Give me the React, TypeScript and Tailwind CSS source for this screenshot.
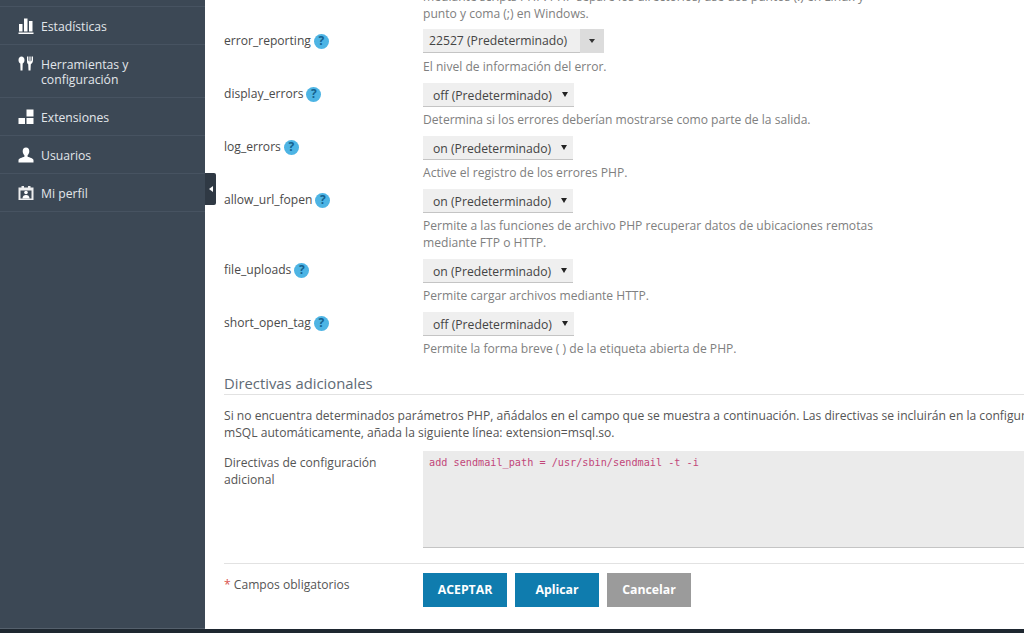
import React from "react";

function Help() {
  return (
    <span className="inline-flex w-[15px] h-[15px] rounded-full bg-[#4db4e4] text-[#15618f] text-[12px] font-bold items-center justify-center leading-none shrink-0">?</span>
  );
}

function Select({ value, w }: { value: string; w: string }) {
  return (
    <div className={`${w} h-[24px] bg-[#efefef] border-b border-[#c4c4c4] flex items-center justify-between pl-[10px] pr-[6px] pt-[3px] text-[12.2px] text-[#444]`}>
      <span>{value}</span>
      <svg width="6" height="5" viewBox="0 0 6 5" className="-mt-[3px]"><path d="M0 0h6L3 5z" fill="#222" /></svg>
    </div>
  );
}

function ComboSelect() {
  return (
    <div className="w-[181px] h-[24px] -mt-[1px] mb-[5px] flex text-[12.2px] text-[#444]">
      <div className="flex-1 bg-[#efefef] border-b border-[#c4c4c4] pl-[6px] pt-[1px] flex items-center">22527 (Predeterminado)</div>
      <div className="w-[24px] bg-[#dcdcdc] flex items-center justify-center">
        <svg width="6" height="4" viewBox="0 0 6 4"><path d="M0 0h6L3 4z" fill="#333" /></svg>
      </div>
    </div>
  );
}

function Row({ label, helpText, control }: { label: string; helpText: React.ReactNode; control: React.ReactNode }) {
  return (
    <div className="flex mb-[8px]">
      <div className="w-[199px] h-[24px] -mt-[1px] flex items-center gap-[3px] text-[12.1px] text-[#4a4a4a] shrink-0">
        <span>{label}</span>
        <Help />
      </div>
      <div>
        {control}
        <div className="mt-[4px] text-[12.1px] leading-[17px] text-[#808080] w-[470px]">{helpText}</div>
      </div>
    </div>
  );
}

const icons: Record<string, React.ReactNode> = {
  stats: (
    <svg width="16" height="16" viewBox="0 0 16 16" fill="#fff">
      <rect x="1" y="6" width="3.5" height="7.500" /><rect x="6" y="0.500" width="3.5" height="13" /><rect x="11" y="3" width="3.5" height="10.500" /><rect x="0.500" y="14.500" width="15" height="1.500" />
    </svg>
  ),
  tools: (
    <svg width="16" height="16" viewBox="0 0 16 16" fill="#fff">
      <path d="M3.500 0.500C5.200 0.500 6.500 2 6.500 4c0 1.800-.8 3-1.800 3.500L4.500 14.500h-2L2.300 7.500C1.300 7 .5 5.800.5 4 .5 2 1.800.5 3.500.500z" />
      <path d="M9 0.500h1.400v3.300c0 1 .5 1.700 1 1.700V.5h1.200v5c.5 0 1-.7 1-1.700V.5H15v3.800c0 2-1 3.300-2.200 3.900l-.3 6.300h-2l-.3-6.300C9 7.600 9 6.300 9 4.300z" />
    </svg>
  ),
  ext: (
    <svg width="16" height="16" viewBox="0 0 16 16" fill="#fff">
      <rect x="0.500" y="9" width="6.500" height="6" /><rect x="8.500" y="9" width="7" height="6" /><rect x="8.500" y="0.500" width="7" height="7" />
    </svg>
  ),
  user: (
    <svg width="16" height="16" viewBox="0 0 16 16" fill="#fff">
      <path d="M8 0.500c2.200 0 3.300 1.700 3.300 3.800 0 1.700-.8 3.200-1.700 4v1.500c2 .8 5.900 1.300 5.900 3.500V15.500H.5v-2.200c0-2.200 3.900-2.700 5.900-3.500V8.300c-.9-.8-1.700-2.300-1.700-4C4.700 2.200 5.800.5 8 .5z" />
    </svg>
  ),
  profile: (
    <svg width="16" height="16" viewBox="0 0 16 16" fill="#fff">
      <path d="M0.500 2.500h3V1h2.500v1.500h4V1h2.500v1.500h3V15H.5z" opacity="0.900" />
      <rect x="2.500" y="5.500" width="11" height="8" fill="#3c4855" />
      <circle cx="8" cy="7.500" r="1.800" />
      <path d="M4.500 13.500c0-2.500 1.500-3.500 3.500-3.500s3.500 1 3.500 3.500z" />
    </svg>
  ),
};

function NavItem({ icon, label }: { icon: string; label: React.ReactNode }) {
  return (
    <div className="flex gap-[6px] pl-[18px] pt-[12px] pb-[10px] border-b border-[#475361] text-[12.2px] leading-[15px] text-[#e2e6ea]">
      <span className="w-[17px] h-[16px] shrink-0 -mt-[1px]">{icons[icon]}</span>
      <span>{label}</span>
    </div>
  );
}

export default function App() {
  return (
    <div className="h-[633px] overflow-hidden flex flex-col bg-white font-['Open_Sans',sans-serif]">
      <div className="flex flex-1 min-h-0">
        <aside className="w-[205px] shrink-0 bg-[#3c4855] relative border-b border-[#55606c]">
          <div className="h-[7px] border-b border-[#475361]" />
          <NavItem icon="stats" label="Estadísticas" />
          <NavItem icon="tools" label={<>Herramientas y<br />configuración</>} />
          <NavItem icon="ext" label="Extensiones" />
          <NavItem icon="user" label="Usuarios" />
          <NavItem icon="profile" label="Mi perfil" />
          <div className="absolute left-[205px] top-[173px] w-[11px] h-[32px] bg-[#2f3944] rounded-r-[2px] flex items-center justify-center">
            <svg width="4" height="6" viewBox="0 0 4 6"><path d="M4 0v6L0 3z" fill="#fff" /></svg>
          </div>
        </aside>
        <main className="flex-1 min-w-0 overflow-hidden pl-[19px]">
          <div className="ml-[199px] mt-[-12px] mb-[8px] text-[12.1px] leading-[17px] text-[#808080] w-[470px]">
            mediante scripts PHP. PHP separe los directorios; use dos puntos (:) en Linux y<br />punto y coma (;) en Windows.
          </div>
          <Row label="error_reporting" control={<ComboSelect />} helpText="El nivel de información del error." />
          <Row label="display_errors" control={<Select value="off (Predeterminado)" w="w-[151px]" />} helpText="Determina si los errores deberían mostrarse como parte de la salida." />
          <Row label="log_errors" control={<Select value="on (Predeterminado)" w="w-[150px]" />} helpText="Active el registro de los errores PHP." />
          <Row label="allow_url_fopen" control={<Select value="on (Predeterminado)" w="w-[150px]" />} helpText="Permite a las funciones de archivo PHP recuperar datos de ubicaciones remotas mediante FTP o HTTP." />
          <Row label="file_uploads" control={<Select value="on (Predeterminado)" w="w-[150px]" />} helpText="Permite cargar archivos mediante HTTP." />
          <Row label="short_open_tag" control={<Select value="off (Predeterminado)" w="w-[151px]" />} helpText="Permite la forma breve ( ) de la etiqueta abierta de PHP." />

          <h2 className="mt-[16px] text-[14.8px] leading-[21px] text-[#5f6b75] border-b border-[#e2e2e2]">Directivas adicionales</h2>
          <p className="mt-[12px] text-[12.1px] leading-[17px] text-[#555] whitespace-nowrap">
            Si no encuentra determinados parámetros PHP, añádalos en el campo que se muestra a continuación. Las directivas se incluirán en la configuración de PHP. Por ejemplo, para activar<br />mSQL automáticamente, añada la siguiente línea: extension=msql.so.
          </p>
          <div className="flex mt-[10px]">
            <div className="w-[199px] shrink-0 text-[12.1px] leading-[17px] text-[#555] pt-[3px]">Directivas de configuración<br />adicional</div>
            <div className="flex-1 h-[97px] bg-[#ebebeb] border-b border-[#c4c4c4] px-[6px] py-[5px] font-['DejaVu_Sans_Mono',monospace] text-[10.2px] leading-[14px] text-[#c2477a] whitespace-pre">add sendmail_path = /usr/sbin/sendmail -t -i</div>
          </div>
          <div className="mt-[15px] border-t border-[#e2e2e2] pt-[9px] flex">
            <div className="w-[199px] shrink-0 text-[12.1px] text-[#555] pt-[3px]"><span className="text-[#d9534f]">*</span> Campos obligatorios</div>
            <div className="flex gap-[8px] text-[12.3px] font-bold text-white">
              <button className="w-[84px] h-[34px] bg-[#0f7cae]">ACEPTAR</button>
              <button className="w-[84px] h-[34px] bg-[#0f7cae]">Aplicar</button>
              <button className="w-[84px] h-[34px] bg-[#9b9b9b]">Cancelar</button>
            </div>
          </div>
        </main>
      </div>
      <div className="h-[4px] bg-[#1e2730] shrink-0" />
    </div>
  );
}
